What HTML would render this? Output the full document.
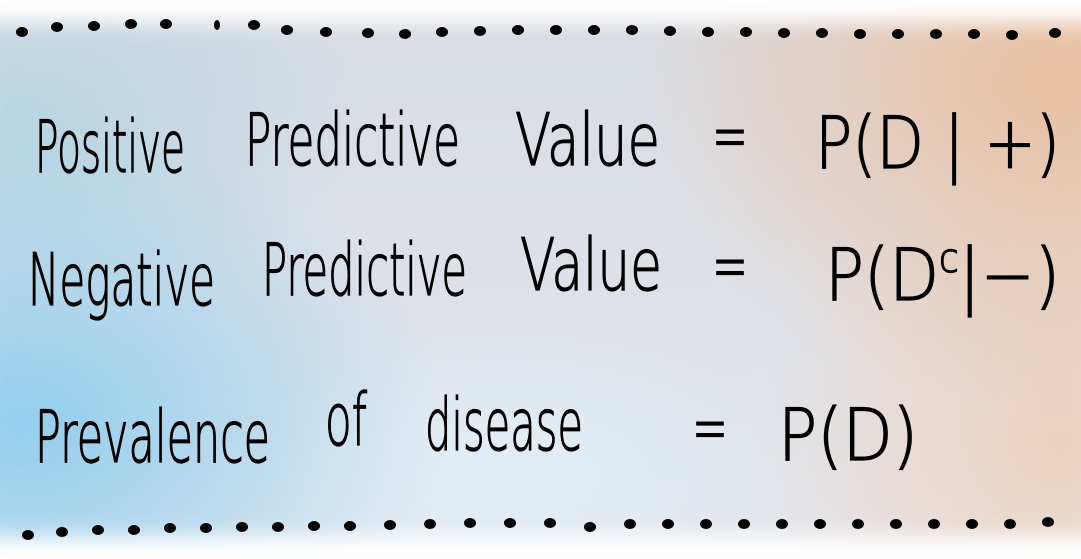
<!DOCTYPE html>
<html><head><style>
html,body{margin:0;padding:0;background:#fff;}
.wrap{position:relative;width:1081px;height:559px;overflow:hidden;background:#fff;}
.bg{position:absolute;left:-20px;top:22px;width:1121px;height:515px;filter:blur(10px);
background:
radial-gradient(ellipse 420px 330px at 1080px 60px, rgba(236,190,155,0.95), rgba(236,190,155,0) 100%),
radial-gradient(ellipse 300px 300px at 1080px 420px, rgba(240,205,180,0.8), rgba(240,205,180,0) 100%),
radial-gradient(ellipse 420px 300px at 40px 400px, rgba(140,205,238,0.95), rgba(140,205,238,0) 100%),
radial-gradient(ellipse 350px 200px at 40px 100px, rgba(175,210,225,0.8), rgba(175,210,225,0) 100%),
radial-gradient(ellipse 300px 150px at 520px 450px, rgba(225,240,248,0.9), rgba(225,240,248,0) 100%),
linear-gradient(#d8dce3,#e3e6ec);}
svg{position:absolute;left:0;top:0;}
text{font-family:"DejaVu Sans ExtraLight","DejaVu Sans","Liberation Sans",sans-serif;font-weight:200;fill:#000;stroke:#000;stroke-width:1.3;}
</style></head><body><div class="wrap"><div class="bg"></div>
<svg width="1081" height="559" viewBox="0 0 1081 559">
<g font-size="72">
<text x="35" y="172" textLength="150" lengthAdjust="spacingAndGlyphs">Positive</text>
<text x="245" y="165" textLength="215" lengthAdjust="spacingAndGlyphs">Predictive</text>
<text x="515" y="165" textLength="145" lengthAdjust="spacingAndGlyphs">Value</text>
<text x="712" y="160" textLength="36" lengthAdjust="spacingAndGlyphs">=</text>
<text x="815" y="168" textLength="245" lengthAdjust="spacingAndGlyphs">P(D | +)</text>
<text x="28" y="305" textLength="187" lengthAdjust="spacingAndGlyphs">Negative</text>
<text x="262" y="295" textLength="205" lengthAdjust="spacingAndGlyphs">Predictive</text>
<text x="520" y="290" textLength="142" lengthAdjust="spacingAndGlyphs">Value</text>
<text x="712" y="290" textLength="36" lengthAdjust="spacingAndGlyphs">=</text>
<text x="825" y="300" textLength="235" lengthAdjust="spacingAndGlyphs">P(D<tspan font-size="40" dy="-28">c</tspan><tspan dy="28">|−)</tspan></text>
<text x="35" y="462" textLength="235" lengthAdjust="spacingAndGlyphs">Prevalence</text>
<text x="325" y="445" textLength="42" lengthAdjust="spacingAndGlyphs">of</text>
<text x="425" y="450" textLength="158" lengthAdjust="spacingAndGlyphs">disease</text>
<text x="692" y="452" textLength="36" lengthAdjust="spacingAndGlyphs">=</text>
<text x="778" y="460" textLength="140" lengthAdjust="spacingAndGlyphs">P(D)</text>
</g>
<g fill="#000">
<ellipse cx="22" cy="32" rx="6" ry="5"/><ellipse cx="57" cy="27" rx="6" ry="5"/><ellipse cx="94" cy="26" rx="6" ry="5"/><ellipse cx="131" cy="24" rx="6" ry="5"/><ellipse cx="166" cy="24" rx="6" ry="5"/><ellipse cx="217" cy="25" rx="3" ry="5"/><ellipse cx="254" cy="25" rx="6" ry="5"/><ellipse cx="287" cy="30" rx="6" ry="5"/><ellipse cx="326" cy="32" rx="6" ry="5"/><ellipse cx="368" cy="33" rx="6" ry="5"/><ellipse cx="405" cy="34" rx="6" ry="5"/><ellipse cx="442" cy="32" rx="6" ry="5"/><ellipse cx="480" cy="31" rx="6" ry="5"/><ellipse cx="518" cy="30" rx="6" ry="5"/><ellipse cx="556" cy="30" rx="6" ry="5"/><ellipse cx="594" cy="30" rx="6" ry="5"/><ellipse cx="632" cy="30" rx="6" ry="5"/><ellipse cx="670" cy="31" rx="6" ry="5"/><ellipse cx="708" cy="32" rx="6" ry="5"/><ellipse cx="746" cy="32" rx="6" ry="5"/><ellipse cx="784" cy="33" rx="6" ry="5"/><ellipse cx="822" cy="33" rx="6" ry="5"/><ellipse cx="860" cy="34" rx="6" ry="5"/><ellipse cx="898" cy="34" rx="6" ry="5"/><ellipse cx="936" cy="34" rx="6" ry="5"/><ellipse cx="974" cy="34" rx="6" ry="5"/><ellipse cx="1012" cy="35" rx="6" ry="5"/><ellipse cx="1055" cy="33" rx="6" ry="5"/>
<ellipse cx="28" cy="535" rx="6" ry="5"/><ellipse cx="62" cy="532" rx="6" ry="5"/><ellipse cx="98" cy="530" rx="6" ry="5"/><ellipse cx="134" cy="530" rx="6" ry="5"/><ellipse cx="170" cy="528" rx="6" ry="5"/><ellipse cx="206" cy="528" rx="6" ry="5"/><ellipse cx="242" cy="527" rx="6" ry="5"/><ellipse cx="278" cy="527" rx="6" ry="5"/><ellipse cx="314" cy="526" rx="6" ry="5"/><ellipse cx="350" cy="526" rx="6" ry="5"/><ellipse cx="390" cy="525" rx="6" ry="5"/><ellipse cx="430" cy="524" rx="6" ry="5"/><ellipse cx="470" cy="523" rx="6" ry="5"/><ellipse cx="510" cy="523" rx="6" ry="5"/><ellipse cx="550" cy="523" rx="6" ry="5"/><ellipse cx="590" cy="527" rx="6" ry="5"/><ellipse cx="630" cy="524" rx="6" ry="5"/><ellipse cx="668" cy="524" rx="6" ry="5"/><ellipse cx="706" cy="524" rx="6" ry="5"/><ellipse cx="744" cy="524" rx="6" ry="5"/><ellipse cx="782" cy="524" rx="6" ry="5"/><ellipse cx="820" cy="524" rx="6" ry="5"/><ellipse cx="858" cy="524" rx="6" ry="5"/><ellipse cx="896" cy="524" rx="6" ry="5"/><ellipse cx="934" cy="524" rx="6" ry="5"/><ellipse cx="972" cy="524" rx="6" ry="5"/><ellipse cx="1010" cy="524" rx="6" ry="5"/><ellipse cx="1048" cy="522" rx="6" ry="5"/>
</g>
</svg></div></body></html>
